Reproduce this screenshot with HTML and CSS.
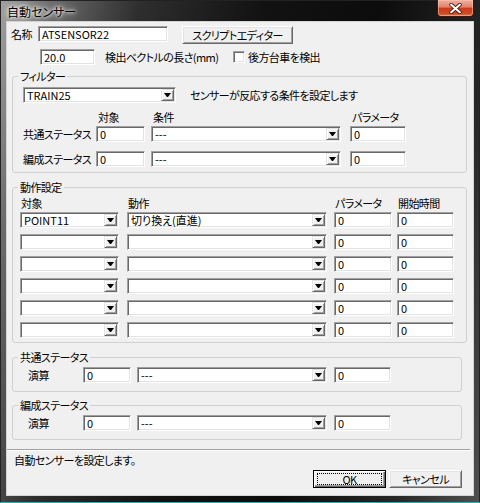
FILE: index.html
```html
<!DOCTYPE html>
<html lang="ja">
<head>
    <meta charset="UTF-8">
    <title>自動センサー</title>
    <link rel="stylesheet" href="styles.css">
</head>
<body>

    <div class="window">
        <div class="titlebar">
            <span class="title">自動センサー</span>
            <div class="close-btn">
                <svg class="close-icon" viewBox="0 0 12 10">
                    <path d="M2 1.5 L10 8.5 M10 1.5 L2 8.5" stroke="#3a1008" stroke-width="3.4" stroke-linecap="round"></path>
                    <path d="M2 1.5 L10 8.5 M10 1.5 L2 8.5" stroke="#ffffff" stroke-width="2" stroke-linecap="round"></path>
                </svg>
            </div>
        </div>

        <div class="client">
            <div class="row row-name">
                <span class="name-label">名称</span>
                <div class="edit w-name">ATSENSOR22</div>
                <div class="btn btn-script">スクリプトエディター</div>
            </div>

            <div class="row row-length">
                <div class="edit w-length">20.0</div>
                <span class="length-label">検出ベクトルの長さ(mm)</span>
                <span class="checkbox"></span>
                <span class="check-label">後方台車を検出</span>
            </div>

            <fieldset class="group group-wide group-filter">
                <legend>フィルター</legend>
                <div class="row filter-top">
                    <div class="combo w-train"><span class="combo-text">TRAIN25</span><span class="combo-arrow"></span></div>
                    <span class="hint">センサーが反応する条件を設定します</span>
                </div>
                <div class="row filter-head">
                    <span class="f-label"></span>
                    <span class="f-target head">対象</span>
                    <span class="f-cond head">条件</span>
                    <span class="f-param head">パラメータ</span>
                </div>
                <div class="row filter-row">
                    <span class="f-label">共通ステータス</span>
                    <div class="edit f-target">0</div>
                    <div class="combo f-cond"><span class="combo-text">---</span><span class="combo-arrow"></span></div>
                    <div class="edit f-param">0</div>
                </div>
                <div class="row filter-row filter-row-2">
                    <span class="f-label">編成ステータス</span>
                    <div class="edit f-target">0</div>
                    <div class="combo f-cond"><span class="combo-text">---</span><span class="combo-arrow"></span></div>
                    <div class="edit f-param">0</div>
                </div>
            </fieldset>

            <fieldset class="group group-wide group-action">
                <legend>動作設定</legend>
                <div class="row action-head">
                    <span class="a-target head">対象</span>
                    <span class="a-action head">動作</span>
                    <span class="a-param head">パラメータ</span>
                    <span class="a-time head">開始時間</span>
                </div>
                <div class="row action-row">
                    <div class="combo a-target"><span class="combo-text">POINT11</span><span class="combo-arrow"></span></div>
                    <div class="combo a-action"><span class="combo-text">切り換え(直進)</span><span class="combo-arrow"></span></div>
                    <div class="edit a-param">0</div>
                    <div class="edit a-time">0</div>
                </div>
                <div class="row action-row">
                    <div class="combo a-target"><span class="combo-text"></span><span class="combo-arrow"></span></div>
                    <div class="combo a-action"><span class="combo-text"></span><span class="combo-arrow"></span></div>
                    <div class="edit a-param">0</div>
                    <div class="edit a-time">0</div>
                </div>
                <div class="row action-row">
                    <div class="combo a-target"><span class="combo-text"></span><span class="combo-arrow"></span></div>
                    <div class="combo a-action"><span class="combo-text"></span><span class="combo-arrow"></span></div>
                    <div class="edit a-param">0</div>
                    <div class="edit a-time">0</div>
                </div>
                <div class="row action-row">
                    <div class="combo a-target"><span class="combo-text"></span><span class="combo-arrow"></span></div>
                    <div class="combo a-action"><span class="combo-text"></span><span class="combo-arrow"></span></div>
                    <div class="edit a-param">0</div>
                    <div class="edit a-time">0</div>
                </div>
                <div class="row action-row">
                    <div class="combo a-target"><span class="combo-text"></span><span class="combo-arrow"></span></div>
                    <div class="combo a-action"><span class="combo-text"></span><span class="combo-arrow"></span></div>
                    <div class="edit a-param">0</div>
                    <div class="edit a-time">0</div>
                </div>
                <div class="row action-row">
                    <div class="combo a-target"><span class="combo-text"></span><span class="combo-arrow"></span></div>
                    <div class="combo a-action"><span class="combo-text"></span><span class="combo-arrow"></span></div>
                    <div class="edit a-param">0</div>
                    <div class="edit a-time">0</div>
                </div>
            </fieldset>

            <fieldset class="group group-narrow group-common">
                <legend>共通ステータス</legend>
                <div class="row status-row">
                    <span class="s-label">演算</span>
                    <div class="edit s-value">0</div>
                    <div class="combo s-op"><span class="combo-text">---</span><span class="combo-arrow"></span></div>
                    <div class="edit s-param">0</div>
                </div>
            </fieldset>

            <fieldset class="group group-narrow group-train">
                <legend>編成ステータス</legend>
                <div class="row status-row">
                    <span class="s-label">演算</span>
                    <div class="edit s-value">0</div>
                    <div class="combo s-op"><span class="combo-text">---</span><span class="combo-arrow"></span></div>
                    <div class="edit s-param">0</div>
                </div>
            </fieldset>

            <div class="separator"></div>

            <div class="status-text">自動センサーを設定します。</div>

            <div class="row buttons">
                <div class="btn btn-dialog btn-default"><span class="focus-rect">OK</span></div>
                <div class="btn btn-dialog">キャンセル</div>
            </div>
        </div>
    </div>

</body>
</html>
```

FILE: styles.css
```css
* {
    box-sizing: border-box;
}

body, html {
    margin: 0;
    padding: 0;
    background-color: #000;
    font-family: "Noto Sans CJK JP", "Liberation Sans", sans-serif;
    font-size: 11px;
    letter-spacing: -0.6px;
    font-feature-settings: "palt";
    color: #000;
}

/* Vista dark glass frame */
.window {
    width: 480px;
    height: 503px;
    padding: 0 7px 8px 7px;
    display: flex;
    flex-direction: column;
    background: linear-gradient(102deg, #a2a2a2 0%, #6a6a6a 9%, #2e2e2e 24%, #121212 45%, #0c0c0c 65%, #262626 85%, #505050 100%);
    box-shadow: inset 0 -1px #3aa6b4, inset 0 0 0 1px #222;
}

.titlebar {
    height: 22px;
    display: flex;
    align-items: flex-start;
    flex-shrink: 0;
}

.title {
    margin-top: 5px;
    font-size: 12px;
    letter-spacing: 0;
    line-height: 14px;
    color: #000;
    text-shadow: 0 0 3px #fff, 0 0 5px #fff, 0 0 8px rgba(255, 255, 255, 0.9);
}

.close-btn {
    margin-left: auto;
    margin-right: -1px;
    width: 37px;
    height: 17px;
    border: 1px solid #4a130a;
    border-top: none;
    border-radius: 0 0 4px 4px;
    background: linear-gradient(to bottom, #eeb2a2 0%, #e2806a 45%, #c93a1c 50%, #d24a24 85%, #e27a48 100%);
    box-shadow: inset 0 0 0 1px rgba(255, 200, 180, 0.5);
    display: flex;
    align-items: center;
    justify-content: center;
}

.close-icon {
    width: 13px;
    height: 11px;
}

.client {
    flex: 1;
    background-color: #f0f0f0;
    box-shadow: 0 0 0 1px #d4d4d4;
}

.row {
    display: flex;
    align-items: center;
}

.row > * {
    flex-shrink: 0;
    white-space: nowrap;
}

/* classic sunken edit box */
.edit {
    height: 16px;
    background: #fff;
    border: 1px solid;
    border-color: #a0a0a0 #fff #fff #a0a0a0;
    box-shadow: inset 1px 1px #696969, inset -1px -1px #e3e3e3;
    padding: 0 2px 0 3px;
    line-height: 14px;
    letter-spacing: 0;
}

.combo {
    height: 16px;
    display: flex;
    background: #fff;
    border: 1px solid;
    border-color: #a0a0a0 #fff #fff #a0a0a0;
    box-shadow: inset 1px 1px #696969, inset -1px -1px #e3e3e3;
    padding: 1px;
}

.combo-text {
    flex: 1;
    padding-left: 2px;
    line-height: 12px;
    letter-spacing: 0;
}

.combo-arrow {
    width: 13px;
    height: 12px;
    background: #f0f0f0;
    border: 1px solid;
    border-color: #e3e3e3 #696969 #696969 #e3e3e3;
    box-shadow: inset 1px 1px #fff, inset -1px -1px #a0a0a0;
    display: flex;
    align-items: center;
    justify-content: center;
}

.combo-arrow::after {
    content: "";
    width: 1px;
    border-left: 3px solid transparent;
    border-right: 3px solid transparent;
    border-top: 4px solid #000;
}

.btn {
    height: 18px;
    background: #f0f0f0;
    border: 1px solid;
    border-color: #fff #696969 #696969 #fff;
    box-shadow: inset 1px 1px #e3e3e3, inset -1px -1px #a0a0a0;
    line-height: 16px;
    text-align: center;
}

.checkbox {
    width: 12px;
    height: 12px;
    background: #fff;
    border: 1px solid;
    border-color: #a0a0a0 #fff #fff #a0a0a0;
    box-shadow: inset 1px 1px #696969, inset -1px -1px #e3e3e3;
}

/* top rows */
.row-name {
    margin-top: 4px;
    padding-left: 4px;
    height: 18px;
    align-items: flex-start;
}

.name-label {
    width: 27px;
    line-height: 16px;
}

.w-name {
    width: 130px;
}

.btn-script {
    margin-left: 14px;
    width: 111px;
}

.row-length {
    margin-top: 5px;
    padding-left: 33px;
    height: 16px;
}

.w-length {
    width: 55px;
}

.length-label {
    margin-left: 10px;
    width: 128px;
}

.check-label {
    margin-left: 3px;
}

/* group boxes */
.group {
    margin: 0 0 0 5px;
    padding: 0;
    min-width: 0;
    border: 1px solid #cdd1d4;
    border-radius: 3px;
}

.group legend {
    margin-left: 5px;
    padding: 0 2px;
    line-height: 14px;
}

.group-wide {
    width: 455px;
}

.group-narrow {
    width: 450px;
}

.head {
    line-height: 14px;
}

/* filter */
.group-filter {
    margin-top: 4px;
    padding-bottom: 5px;
}

.group-filter .row {
    padding-left: 10px;
}

.filter-top {
    margin-top: 4px;
    height: 16px;
}

.w-train {
    width: 153px;
}

.hint {
    margin-left: 14px;
}

.filter-head {
    margin-top: 7px;
    height: 14px;
}

.filter-row {
    margin-top: 2px;
    height: 16px;
}

.filter-row-2 {
    margin-top: 9px;
}

.f-label {
    width: 73px;
}

.f-target {
    width: 49px;
}

.f-cond {
    margin-left: 6px;
    width: 190px;
}

.f-param {
    margin-left: 9px;
    width: 56px;
}

.filter-head .head {
    padding-left: 2px;
}

/* action settings */
.group-action {
    margin-top: 7px;
    padding: 2px 0 4px 0;
}

.group-action .row {
    padding-left: 7px;
}

.action-head {
    height: 14px;
}

.action-head .head {
    padding-left: 1px;
}

.action-row {
    margin-top: 6px;
    height: 16px;
}

.action-head + .action-row {
    margin-top: 2px;
}

.a-target {
    width: 99px;
}

.a-action {
    margin-left: 8px;
    width: 200px;
}

.a-param {
    margin-left: 7px;
    width: 58px;
}

.a-time {
    margin-left: 5px;
    width: 57px;
}

/* status groups */
.group-common {
    margin-top: 7px;
    padding: 3px 0 8px 0;
}

.group-train {
    margin-top: 6px;
    padding: 3px 0 8px 0;
}

.status-row {
    height: 16px;
    padding-left: 15px;
}

.s-label {
    width: 55px;
}

.s-value {
    width: 48px;
}

.s-op {
    margin-left: 6px;
    width: 190px;
}

.s-param {
    margin-left: 7px;
    width: 57px;
}

/* footer */
.separator {
    margin-top: 9px;
    width: 463px;
    height: 2px;
    border-top: 1px solid #a0a0a0;
    border-bottom: 1px solid #fff;
}

.status-text {
    margin-top: 2px;
    padding-left: 7px;
    line-height: 14px;
}

.buttons {
    margin-top: 3px;
    justify-content: flex-end;
    padding-right: 11px;
    gap: 3px;
}

.btn-dialog {
    width: 73px;
}

.btn-default {
    border: 1px solid #000;
    box-shadow: inset 1px 1px #fff, inset -1px -1px #696969, inset -2px -2px #a0a0a0;
    padding: 2px 3px;
    line-height: 12px;
}

.focus-rect {
    display: block;
    height: 12px;
    border: 1px dotted #000;
    line-height: 10px;
}
```
